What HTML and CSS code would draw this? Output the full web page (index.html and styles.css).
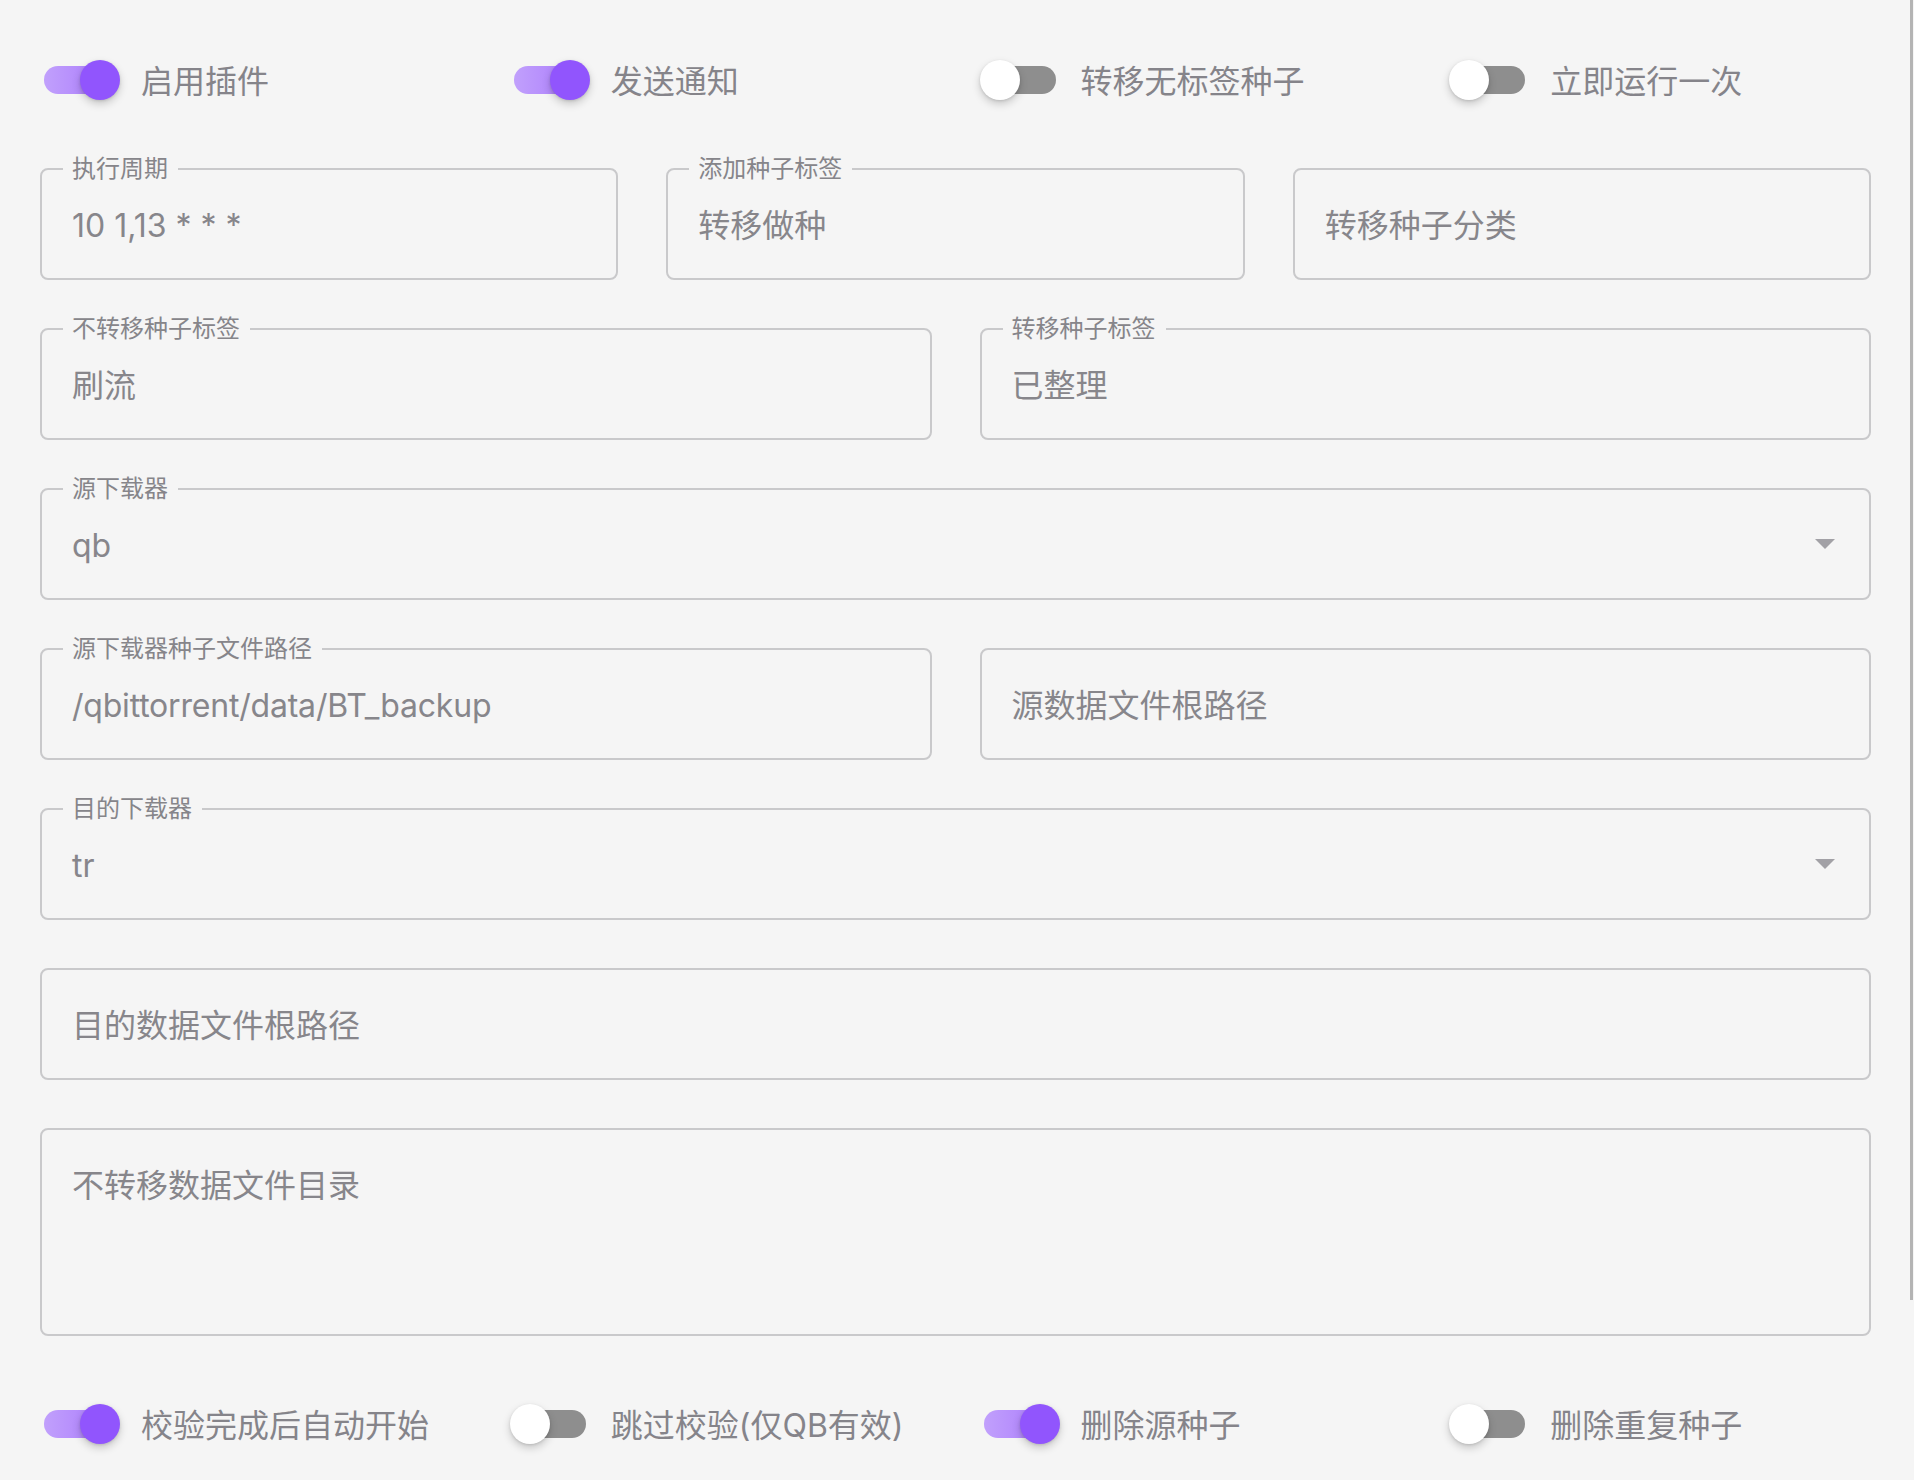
FILE: index.html
```html
<!DOCTYPE html>
<html lang="zh-CN">
<head>
<meta charset="utf-8">
<title>转移做种</title>
<link rel="stylesheet" href="styles.css">
</head>
<body>
<div class="page">
  <div class="row">
    <div class="col col-3">
      <div class="switch on"><span class="ctrl"><span class="track"></span><span class="thumb"></span></span><span class="slabel">启用插件</span></div>
    </div>
    <div class="col col-3">
      <div class="switch on"><span class="ctrl"><span class="track"></span><span class="thumb"></span></span><span class="slabel">发送通知</span></div>
    </div>
    <div class="col col-3">
      <div class="switch"><span class="ctrl"><span class="track"></span><span class="thumb"></span></span><span class="slabel">转移无标签种子</span></div>
    </div>
    <div class="col col-3">
      <div class="switch"><span class="ctrl"><span class="track"></span><span class="thumb"></span></span><span class="slabel">立即运行一次</span></div>
    </div>
  </div>

  <div class="row">
    <div class="col col-4">
      <div class="field"><span class="flabel">执行周期</span><span class="value">10 1,13 * * *</span></div>
    </div>
    <div class="col col-4">
      <div class="field"><span class="flabel">添加种子标签</span><span class="value">转移做种</span></div>
    </div>
    <div class="col col-4">
      <div class="field"><span class="value">转移种子分类</span></div>
    </div>
  </div>

  <div class="row">
    <div class="col col-6">
      <div class="field"><span class="flabel">不转移种子标签</span><span class="value">刷流</span></div>
    </div>
    <div class="col col-6">
      <div class="field"><span class="flabel">转移种子标签</span><span class="value">已整理</span></div>
    </div>
  </div>

  <div class="row">
    <div class="col col-12">
      <div class="field select"><span class="flabel">源下载器</span><span class="value">qb</span><span class="arrow"></span></div>
    </div>
  </div>

  <div class="row">
    <div class="col col-6">
      <div class="field"><span class="flabel">源下载器种子文件路径</span><span class="value latin">/qbittorrent/data/BT_backup</span></div>
    </div>
    <div class="col col-6">
      <div class="field"><span class="value">源数据文件根路径</span></div>
    </div>
  </div>

  <div class="row">
    <div class="col col-12">
      <div class="field select"><span class="flabel">目的下载器</span><span class="value">tr</span><span class="arrow"></span></div>
    </div>
  </div>

  <div class="row">
    <div class="col col-12">
      <div class="field"><span class="value">目的数据文件根路径</span></div>
    </div>
  </div>

  <div class="row">
    <div class="col col-12">
      <div class="field area"><span class="value">不转移数据文件目录</span></div>
    </div>
  </div>

  <div class="row">
    <div class="col col-3">
      <div class="switch on"><span class="ctrl"><span class="track"></span><span class="thumb"></span></span><span class="slabel">校验完成后自动开始</span></div>
    </div>
    <div class="col col-3">
      <div class="switch"><span class="ctrl"><span class="track"></span><span class="thumb"></span></span><span class="slabel">跳过校验(仅QB有效)</span></div>
    </div>
    <div class="col col-3">
      <div class="switch on"><span class="ctrl"><span class="track"></span><span class="thumb"></span></span><span class="slabel">删除源种子</span></div>
    </div>
    <div class="col col-3">
      <div class="switch"><span class="ctrl"><span class="track"></span><span class="thumb"></span></span><span class="slabel">删除重复种子</span></div>
    </div>
  </div>
</div>
<div class="scrollbar"></div>
</body>
</html>
```

FILE: styles.css
```css
html, body {
  margin: 0;
  padding: 0;
}
body {
  background: #f5f5f5;
  font-family: Inter, "Noto Sans CJK SC", sans-serif;
  color: #88878c;
  width: 1914px;
  height: 1480px;
  overflow: hidden;
  position: relative;
}
.page {
  padding: 16px 19px 0 16px;
}
.row {
  display: flex;
}
.col {
  box-sizing: border-box;
  padding: 24px;
  min-width: 0;
}
.col-3 { width: 25%; }
.col-4 { width: 33.3333%; }
.col-6 { width: 50%; }
.col-12 { width: 100%; }

/* switches */
.switch {
  height: 80px;
  display: flex;
  align-items: center;
}
.ctrl {
  position: relative;
  width: 80px;
  height: 40px;
  flex: none;
}
.track {
  position: absolute;
  left: 4px;
  top: 6px;
  width: 72px;
  height: 28px;
  border-radius: 14px;
  background: #8e8e8e;
}
.thumb {
  position: absolute;
  left: 0;
  top: 0;
  width: 40px;
  height: 40px;
  border-radius: 50%;
  background: #ffffff;
  box-shadow: 0 4px 8px rgba(0, 0, 0, 0.18), 0 1px 3px rgba(0, 0, 0, 0.12);
}
.switch.on .track {
  background: linear-gradient(90deg, #c1a0fc, #a877fc);
}
.switch.on .thumb {
  left: 40px;
  background: #9155fd;
}
.slabel {
  margin-left: 21px;
  padding-top: 3px;
  font-size: 32px;
  line-height: 40px;
  white-space: nowrap;
  color: #85848a;
}

/* fields */
.field {
  position: relative;
  box-sizing: border-box;
  height: 112px;
  border: 2px solid #c9c9cb;
  border-radius: 8px;
  display: flex;
  align-items: center;
  padding: 3px 30px 0;
}
.flabel {
  position: absolute;
  left: 21px;
  top: -14px;
  padding: 0 10px 0 9px;
  font-size: 24px;
  line-height: 26px;
  background: #f5f5f5;
  color: #86858a;
  white-space: nowrap;
}
.value {
  font-size: 32px;
  line-height: 40px;
  color: #87868b;
  white-space: nowrap;
}
.value.latin {
  letter-spacing: -0.2px;
}
.arrow {
  position: absolute;
  right: 34px;
  top: 50%;
  margin-top: -5px;
  width: 0;
  height: 0;
  border-left: 10px solid transparent;
  border-right: 10px solid transparent;
  border-top: 10px solid #a2a1a6;
}
.field.area {
  height: 208px;
  align-items: flex-start;
  padding-top: 36px;
}
.scrollbar {
  position: absolute;
  right: 1px;
  top: 0;
  width: 3px;
  height: 1300px;
  background: #b4b4b4;
}
```
